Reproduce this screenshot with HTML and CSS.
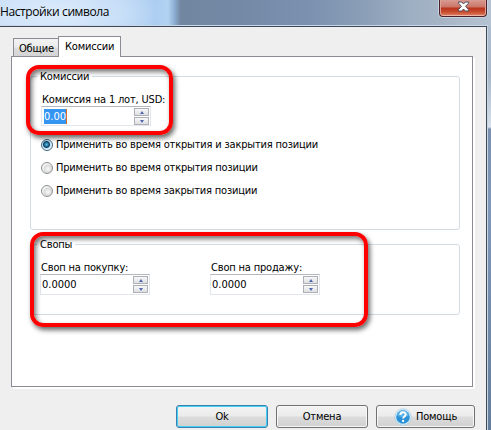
FILE: index.html
```html
<!DOCTYPE html>
<html lang="ru">
<head>
<meta charset="utf-8">
<title>Настройки символа</title>
<link rel="stylesheet" href="styles.css">
</head>
<body>
<div class="window">
  <header class="titlebar">
    <span class="title">Настройки символа</span>
    <button class="close" aria-label="Закрыть">
      <svg width="13" height="11" viewBox="0 0 13 11"><path d="M1.500 1h3.300l1.700 2 1.700-2h3.300v1.200L8.600 5.300l2.900 3.300V10H8.200L6.500 8 4.800 10H1.500V8.600l2.900-3.300-2.900-3.100z" fill="#fff" stroke="#4d4f62" stroke-width="1"/></svg>
    </button>
  </header>
  <main class="client">
    <nav class="tabs">
      <div class="tab">Общие</div>
      <div class="tab active"><span>Комиссии</span></div>
    </nav>
    <section class="panel">
      <div class="group fees">
        <div class="legend">Комиссии</div>
        <div class="field">
          <label>Комиссия на 1 лот, USD:</label>
          <div class="spin"><span class="selected">0.00</span><div class="steps"><i class="up"></i><i class="down"></i></div></div>
        </div>
        <div class="radios">
          <div class="radio on"><i></i><span>Применить во время открытия и закрытия позиции</span></div>
          <div class="radio"><i></i><span>Применить во время открытия позиции</span></div>
          <div class="radio"><i></i><span>Применить во время закрытия позиции</span></div>
        </div>
      </div>
      <div class="group swaps">
        <div class="legend">Свопы</div>
        <div class="pair">
          <div class="field">
            <label>Своп на покупку:</label>
            <div class="spin"><span>0.0000</span><div class="steps"><i class="up"></i><i class="down"></i></div></div>
          </div>
          <div class="field">
            <label>Своп на продажу:</label>
            <div class="spin"><span>0.0000</span><div class="steps"><i class="up"></i><i class="down"></i></div></div>
          </div>
        </div>
      </div>
    </section>
    <footer class="actions">
      <button class="btn ok">Ok</button>
      <button class="btn cancel">Отмена</button>
      <button class="btn help">
        <svg width="18" height="18" viewBox="0 0 18 18"><circle cx="9" cy="9" r="8.200" fill="#d9edf8" stroke="#a9cfe6" stroke-width=".8"/><circle cx="9" cy="9" r="6.800" fill="#2d92d5"/><path d="M3 7a6.300 6.300 0 0 1 12 0c-4 3-8 3-12 0z" fill="#5db3e8"/><path d="M6.400 7c0-3.600 5.300-3.400 5.300-.5C11.700 8.500 9.100 8.400 9.100 10.600" fill="none" stroke="#fff" stroke-width="1.900"/><circle cx="9.100" cy="13" r="1.150" fill="#fff"/></svg>
        <span>Помощь</span>
      </button>
    </footer>
  </main>
  <div class="frame"></div>
</div>
<div class="mark mark-fees"></div>
<div class="mark mark-swaps"></div>
</body>
</html>
```
FILE: styles.css
```css
* { box-sizing: border-box; }
body {
  margin: 0;
  width: 491px;
  height: 430px;
  overflow: hidden;
  position: relative;
  color: #000;
  font: 11px/14px "DejaVu Sans Condensed", "DejaVu Sans", sans-serif;
  font-stretch: condensed;
  letter-spacing: -.18px;
  white-space: nowrap;
}
button { font: inherit; color: inherit; padding: 0; letter-spacing: inherit; }
.window {
  display: grid;
  grid-template: 27px 403px / 487px 4px;
}
.titlebar {
  grid-column: 1 / 3;
  display: flex;
  justify-content: space-between;
  align-items: flex-start;
  padding-right: 4px;
  background:
    linear-gradient(#3d485c, #3d485c) 0 26px / 487px 1px no-repeat,
    linear-gradient(#c9d7e6, #c9d7e6) 0 25px / 488px 1px no-repeat,
    radial-gradient(ellipse 110px 40px at 55px 13px, #dcebfb 0, #d5e7fa88 65%, #d5e7fa00 100%),
    linear-gradient(90deg, #c3dbf5 0, #b5d3f4 120px, #a9cbf0 155px, #b4d3f2 168px, #8fb0d4 174px, #71869f 181px, #7489a6 240px, #7b91af 310px, #8da0b8 370px, #9dafc2 410px, #a6b5c6 440px, #b5c2d1 491px);
}
.title {
  font: 12px/16px "Open Sans", "Noto Sans", sans-serif;
  letter-spacing: -.4px;
  padding-top: 4px;
}
.close {
  width: 48px;
  height: 17px;
  border: 1px solid #4c2029;
  border-top: 0;
  border-radius: 0 0 4px 4px;
  background: linear-gradient(#d79a92 0, #cb7567 7px, #b8331c 8px, #c94c30 12px, #e08768 16px);
  box-shadow: inset 0 -1px 0 #eeb5a3, inset 1px 0 0 #dfa295, inset -1px 0 0 #dfa295, 0 0 0 1px #c6d2df;
  display: flex;
  justify-content: center;
  padding-top: 1px;
}
.client {
  display: flex;
  flex-direction: column;
  background: #efefef;
  border-right: 1px solid #3f4858;
}
.frame {
  border-left: 1px solid #c9d6e4;
  background: linear-gradient(#aebed0 0, #a8b8ca 50px, #d8e1ed 100px, #7a90b0 102px, #8098b9 180px, #647d9d 403px);
}
.tabs {
  display: flex;
  align-items: flex-end;
  height: 30px;
  padding-left: 13px;
  z-index: 1;
}
.tab {
  width: 46px;
  height: 19px;
  padding: 3px 0 0 5px;
  border: 1px solid #8b8c95;
  border-right: 0;
  background: linear-gradient(#f3f3f3 0, #ebebeb 8px, #dddddd 9px, #d2d2d2 18px);
}
.tab.active {
  width: 63px;
  margin-left: -1px;
  height: 21px;
  padding: 3px 0 0 6px;
  border-right: 1px solid #8b8c95;
  border-bottom: 0;
  background: #fff;
}
.panel {
  width: 462px;
  height: 331px;
  margin: -1px 0 0 11px;
  padding: 19px 0 0 18px;
  border: 1px solid #898c95;
  background: #fff;
  box-shadow: 2px 2px 0 #fff;
}
.group {
  width: 430px;
  border: 1px solid #d2dce4;
  border-radius: 3px;
}
.fees { height: 154px; padding-left: 10px; }
.swaps { height: 71px; margin-top: 14px; padding-left: 9px; }
.legend {
  width: max-content;
  margin: -7px 0 0 -4px;
  padding: 0 3px;
  background: #fff;
}
.swaps .legend { margin-left: -3px; }
.field { display: flex; flex-direction: column; width: 110px; }
.fees .field { padding: 8px 0 0; }
.field label { padding-left: 1px; height: 14px; line-height: 16px; }
.spin {
  display: flex;
  justify-content: space-between;
  width: 110px;
  height: 20px;
  border: 1px solid #e3e6ec;
  border-top-color: #b4b8be;
  padding: 1px;
}
.swaps .spin { height: 21px; }
.spin > span { line-height: 18px; margin-left: 1px; letter-spacing: 0; }
.swaps .spin > span { margin-left: 0; }
.spin > .selected {
  line-height: 16px;
  background: #3596f2;
  color: #fff;
  height: 15px;
  margin-top: 1px;
  border-right: 1px solid #d5702c;
}
.steps { display: grid; grid-template-rows: 8px 8px; gap: 1px; width: 15px; }
.steps i {
  display: flex;
  align-items: center;
  justify-content: center;
  border: 1px solid #aeb0b8;
  background: linear-gradient(#f8f8f8, #dedfe2);
}
.steps i::after { content: ""; border: 2.5px solid transparent; }
.steps .up::after { border-bottom: 3px solid #5267ac; border-top: 0; }
.steps .down::after { border-top: 3px solid #5267ac; border-bottom: 0; }
.radios { display: grid; grid-template-rows: repeat(3, 23px); padding-top: 7px; }
.radio { display: flex; align-items: center; gap: 3px; }
.radio i {
  width: 12px;
  height: 12px;
  border: 1px solid #8e8f8f;
  border-radius: 50%;
  background: radial-gradient(circle at 60% 60%, #fafafa 0, #d6d8da 4px, #f4f4f4 5px);
}
.radio.on i {
  border-color: #3c6683;
  background: radial-gradient(circle at 45% 45%, #5cc5e9 0, #1e6f9b 2px, #123d5d 3px, #c5e4f3 4px, #e4f2f8 5px);
}
.pair { display: grid; grid-template-columns: 170px 110px; padding-top: 8px; }
.actions {
  display: grid;
  grid-template-columns: 92px 92px 99px;
  gap: 8px;
  padding: 18px 0 0 176px;
}
.btn {
  height: 23px;
  border: 1px solid #707070;
  border-radius: 3px;
  background: linear-gradient(#f3f3f3 0, #ebebeb 10px, #dcdcdc 11px, #cfcfcf 22px);
  box-shadow: inset 0 0 0 1px #f8f8f8;
}
.ok { border-color: #3b7fac; box-shadow: inset 0 0 0 1px #40d0f8; }
.help { display: flex; align-items: center; justify-content: center; gap: 4px; }
.mark {
  position: absolute;
  z-index: 2;
  border: 4px solid #fe0000;
  border-radius: 13px;
  box-shadow: 2px 3px 5px #0009, inset 2px 3px 5px #0008;
}
.mark-fees { left: 26px; top: 65px; width: 147px; height: 70px; }
.mark-swaps { left: 30px; top: 232px; width: 338px; height: 95px; }
```
